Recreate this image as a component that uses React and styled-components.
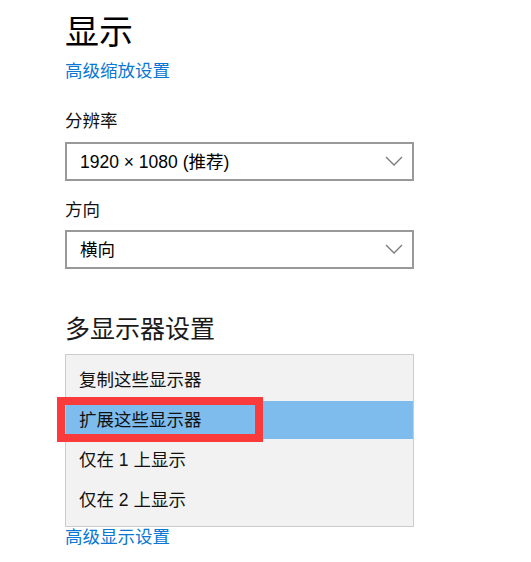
import React from 'react';
import styled, { createGlobalStyle } from 'styled-components';

// Global page setup
const GlobalStyle = createGlobalStyle`
  html, body {
    margin: 0;
    padding: 0;
    background: #ffffff;
  }
  body {
    font-family: "Liberation Sans", "Noto Sans CJK SC", sans-serif;
    color: #000;
  }
`;

const Page = styled.div`
  display: flex;
  flex-direction: column;
  align-items: flex-start;
  padding: 13px 0 0 65px;
  width: 349px;
`;

const Title = styled.h1`
  margin: 0;
  font-size: 34px;
  line-height: 38px;
  font-weight: 400;
  color: #000;
`;

const Heading = styled.h2`
  margin: ${(p) => p.$top}px 0 0;
  font-size: 25px;
  line-height: 30px;
  font-weight: 400;
  color: #1a1a1a;
`;

const Link = styled.a`
  display: block;
  margin-top: ${(p) => p.$top}px;
  font-size: 17.5px;
  line-height: ${(p) => p.$lh || 24}px;
  color: #0a78d4;
  text-decoration: none;
  cursor: pointer;
`;

const Label = styled.div`
  margin-top: ${(p) => p.$top}px;
  font-size: 17.5px;
  line-height: 22px;
  color: #111;
`;

const Select = styled.div`
  box-sizing: border-box;
  margin-top: ${(p) => p.$top}px;
  width: 349px;
  height: 39px;
  border: 2px solid #999;
  display: flex;
  align-items: center;
  justify-content: space-between;
  padding: 0 9px 2px 13px;
  font-size: 17.5px;
  color: #000;
  background: #fff;
`;

const Chevron = () => (
  <svg width="18" height="10" viewBox="0 0 18 10">
    <path d="M1 1 L9 9 L17 1" fill="none" stroke="#7a7a7a" strokeWidth="1.3" />
  </svg>
);

const List = styled.div`
  position: relative;
  box-sizing: border-box;
  margin-top: ${(p) => p.$top}px;
  width: 349px;
  height: 173px;
  background: #f2f2f2;
  border: 1px solid #cccccc;
  padding: 6px 0 7px;
  display: flex;
  flex-direction: column;
  gap: 2px;
`;

const Option = styled.div`
  height: 38px;
  display: flex;
  align-items: center;
  padding: 0 0 3px 13px;
  box-sizing: border-box;
  font-size: 17.5px;
  color: #111;
  background: ${(p) => (p.$selected ? '#7fbcee' : 'transparent')};
`;

// red annotation box drawn over the selected row
const Marker = styled.div`
  position: absolute;
  left: -9px;
  top: 42px;
  width: 206px;
  height: 45px;
  box-sizing: border-box;
  border: 8px solid #fa3b3b;
  pointer-events: none;
`;

const options = ['复制这些显示器', '扩展这些显示器', '仅在 1 上显示', '仅在 2 上显示'];

const App = () => {
  const selected = 1;

  return (
    <>
      <GlobalStyle />
      <Page>
        <Title>显示</Title>
        <Link $top={8}>高级缩放设置</Link>

        <Label $top={27}>分辨率</Label>
        <Select $top={10}>
          <span>1920 × 1080 (推荐)</span>
          <Chevron />
        </Select>

        <Label $top={18}>方向</Label>
        <Select $top={9}>
          <span>横向</span>
          <Chevron />
        </Select>

        <Heading $top={45}>多显示器设置</Heading>
        <List $top={10}>
          {options.map((o, i) => (
            <Option key={o} $selected={i === selected}>
              {o}
            </Option>
          ))}
          <Marker />
        </List>
        <Link $top={0} $lh={20}>高级显示设置</Link>
      </Page>
    </>
  );
};

export default App;
